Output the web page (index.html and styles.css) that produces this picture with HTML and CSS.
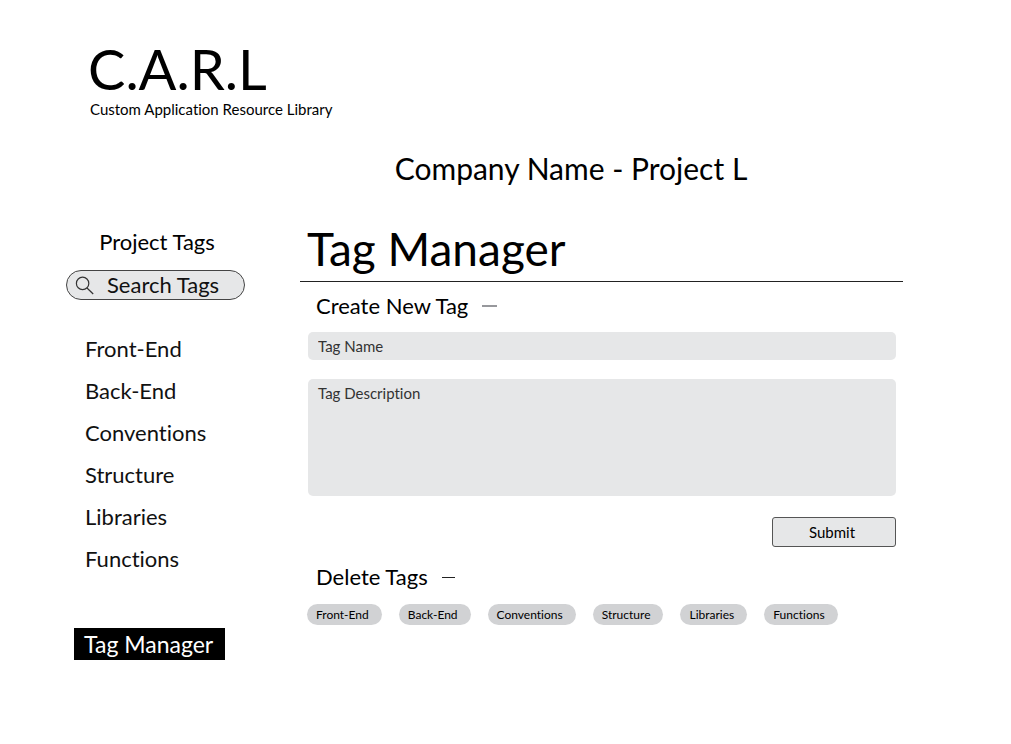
FILE: index.html
```html
<!DOCTYPE html>
<html lang="en">
<head>
<meta charset="utf-8">
<meta name="viewport" content="width=device-width, initial-scale=1">
<title>C.A.R.L - Tag Manager</title>
<link rel="stylesheet" href="styles.css">
</head>
<body>
<div class="page">
  <header class="brand">
    <div class="brand-name">C.A.R.L</div>
    <div class="brand-sub">Custom Application Resource Library</div>
  </header>
  <div class="project">Company Name - Project L</div>
  <div class="layout">
    <aside class="sidebar">
      <h2 class="sidebar-title">Project Tags</h2>
      <div class="search">
        <svg class="search-icon" viewBox="0 0 20 20" aria-hidden="true"><circle cx="7.6" cy="8.4" r="6.2"/><path d="M12 13L18.2 19"/></svg>
        <input class="search-input" type="text" placeholder="Search Tags" aria-label="Search Tags">
      </div>
      <nav class="tags">
        <a class="tag-link" href="#front-end">Front-End</a>
        <a class="tag-link" href="#back-end">Back-End</a>
        <a class="tag-link" href="#conventions">Conventions</a>
        <a class="tag-link" href="#structure">Structure</a>
        <a class="tag-link" href="#libraries">Libraries</a>
        <a class="tag-link" href="#functions">Functions</a>
      </nav>
      <a class="manager-link" href="#manager">Tag Manager</a>
    </aside>
    <main class="main">
      <h1 class="title" id="manager">Tag Manager</h1>
      <button class="section-toggle" type="button" aria-expanded="true">Create New Tag<span class="minus"></span></button>
      <form class="form">
        <input class="field" type="text" placeholder="Tag Name" aria-label="Tag Name">
        <textarea class="field field-area" placeholder="Tag Description" aria-label="Tag Description"></textarea>
        <button class="submit" type="button">Submit</button>
      </form>
      <button class="section-toggle" type="button" aria-expanded="true">Delete Tags<span class="minus minus-dark"></span></button>
      <div class="chips">
        <button class="chip" type="button">Front-End</button>
        <button class="chip" type="button">Back-End</button>
        <button class="chip" type="button">Conventions</button>
        <button class="chip" type="button">Structure</button>
        <button class="chip" type="button">Libraries</button>
        <button class="chip" type="button">Functions</button>
      </div>
    </main>
  </div>
</div>
</body>
</html>
```
FILE: styles.css
```css
* { box-sizing: border-box; }

body {
  margin: 0;
  background: #fff;
  color: #000;
  font-family: Lato, "Open Sans", sans-serif;
  font-variant-ligatures: none;
}

button, input, textarea {
  margin: 0;
  color: inherit;
  font: inherit;
  font-variant-ligatures: none;
}

.page { padding: 38px 108px 40px 66px; }

.brand { padding-left: 22px; }
.brand-name { font-size: 56px; line-height: 62px; }
.brand-sub { font-size: 15px; line-height: 18px; padding-left: 2px; }

.project {
  margin-top: 30px;
  padding-left: 173px;
  text-align: center;
  font-size: 30px;
  line-height: 40px;
}

.layout {
  display: grid;
  grid-template-columns: 179px minmax(0, 1fr);
  column-gap: 55px;
  margin-top: 32px;
}

.sidebar { display: flex; flex-direction: column; padding-top: 7px; }
.sidebar-title {
  margin: 0;
  padding-left: 3px;
  text-align: center;
  font-size: 22px;
  font-weight: 400;
  line-height: 30px;
}

.search {
  display: flex;
  align-items: center;
  gap: 12px;
  height: 30px;
  margin-top: 13px;
  padding: 0 10px 0 8px;
  border: 1px solid #444;
  border-radius: 15px;
  background: #e6e7e8;
}
.search-icon {
  flex: none;
  width: 20px;
  height: 20px;
  fill: none;
  stroke: #333;
  stroke-width: 1.2;
}
.search-input {
  flex: 1;
  min-width: 0;
  padding: 0;
  border: 0;
  background: none;
  font-size: 22px;
  line-height: 28px;
}
.search-input::placeholder { color: #111; opacity: 1; }

.tags { display: flex; flex-direction: column; margin-top: 28px; }
.tag-link {
  padding-left: 19px;
  color: #111;
  font-size: 22px;
  line-height: 42px;
  text-decoration: none;
}

.manager-link {
  align-self: flex-start;
  margin: 48px 0 0 8px;
  padding: 0 12px 0 10px;
  background: #000;
  color: #fff;
  font-size: 23px;
  line-height: 32px;
  text-decoration: none;
}

.main { display: flex; flex-direction: column; align-items: stretch; }
.title {
  margin: 0;
  padding: 0 0 3px 7px;
  border-bottom: 1px solid #222;
  font-size: 46px;
  font-weight: 400;
  line-height: 58px;
}

.section-toggle {
  display: flex;
  align-items: center;
  align-self: flex-start;
  gap: 14px;
  margin-top: 9px;
  padding: 0 0 0 16px;
  border: 0;
  background: none;
  font-size: 22px;
  line-height: 30px;
}
.minus { width: 15px; height: 2px; background: #97989c; }
.minus-dark { width: 13px; height: 1px; background: #222; }

.form { display: flex; flex-direction: column; padding: 0 7px 0 8px; }
.field {
  width: 100%;
  height: 28px;
  margin-top: 11px;
  padding: 4px 10px;
  border: 0;
  border-radius: 5px;
  background: #e6e7e8;
  font-size: 15px;
  line-height: 20px;
}
.field::placeholder { color: #333; opacity: 1; }
.field-area { height: 117px; margin-top: 19px; resize: none; }

.submit {
  align-self: flex-end;
  width: 124px;
  height: 30px;
  margin: 21px 0 6px;
  padding: 0 4px 0 0;
  border: 1px solid #555;
  border-radius: 3px;
  background: #e6e7e8;
  font-size: 15px;
}

.chips { display: flex; flex-wrap: wrap; gap: 8px 17px; margin-top: 12px; padding-left: 7px; }
.chip {
  height: 21px;
  padding: 0 13px 0 9px;
  border: 0;
  border-radius: 11px;
  background: #d1d2d4;
  font-size: 12px;
  line-height: 21px;
}
```
